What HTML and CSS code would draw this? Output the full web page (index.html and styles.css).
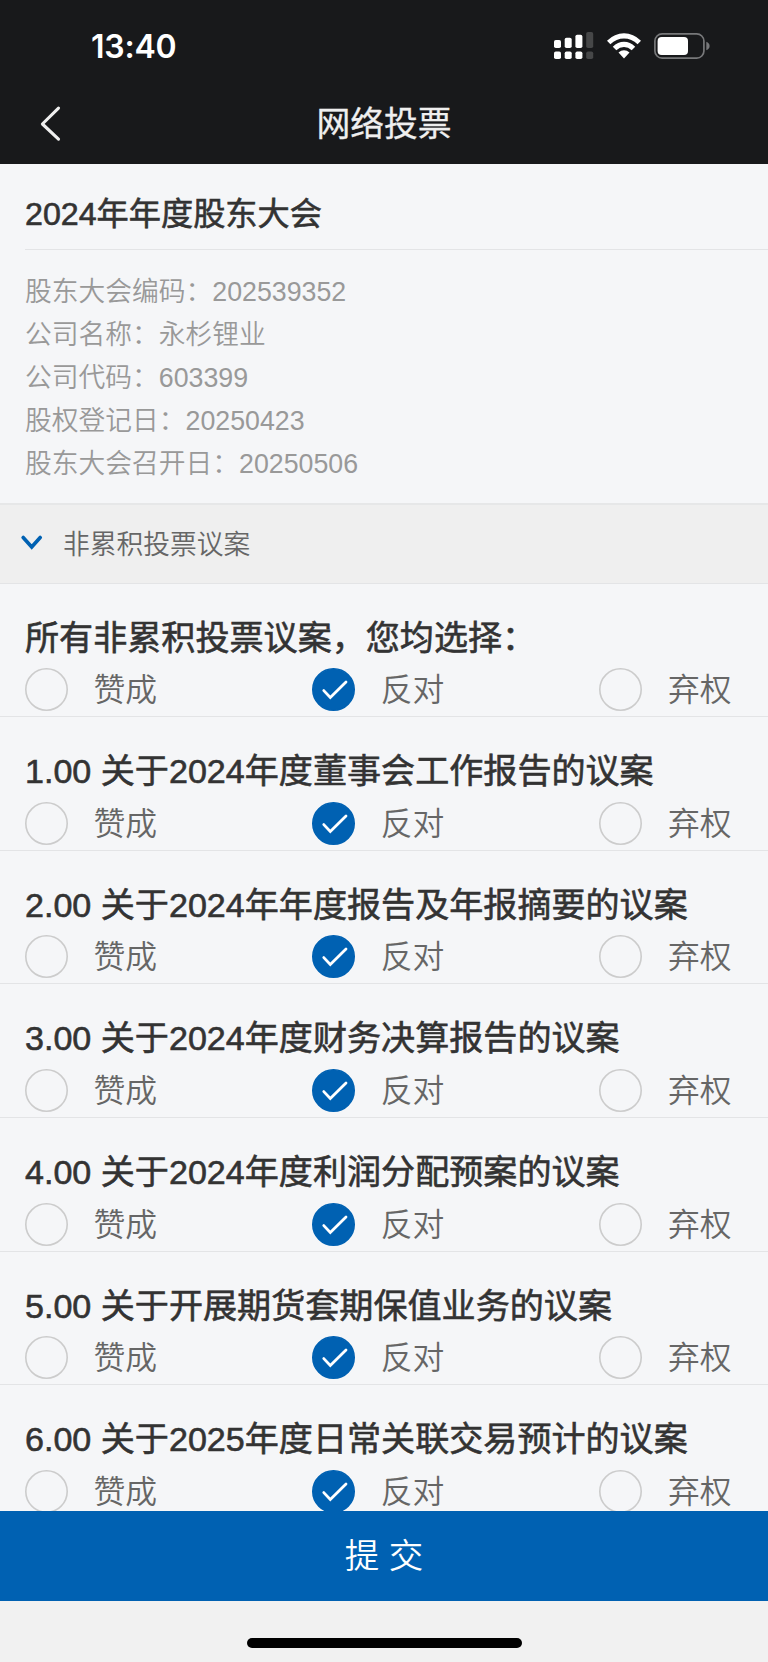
FILE: index.html
```
<!DOCTYPE html>
<html lang="zh-CN">
<head>
  <meta charset="UTF-8">
  <meta name="viewport" content="width=device-width, initial-scale=1.0">
  <title>网络投票</title>
  <link rel="stylesheet" href="styles.css">
</head>
<body>
  <div class="app">
    <header class="header">
      <div class="status-bar">
        <span class="time">13:40</span>
        <div class="status-icons">
          <svg class="signal" width="40" height="28" viewBox="0 0 40 28" fill="#fff">
            <rect x="0" y="8" width="7" height="8" rx="1.8"/>
            <rect x="10.7" y="5.8" width="7" height="10.2" rx="1.8"/>
            <rect x="21.4" y="2.8" width="7" height="13.2" rx="1.8"/>
            <rect x="32.2" y="0" width="7" height="16" rx="1.8" fill="#464748"/>
            <rect x="0" y="19.4" width="7" height="7.6" rx="1.8"/>
            <rect x="10.7" y="19.4" width="7" height="7.6" rx="1.8"/>
            <rect x="21.4" y="19.4" width="7" height="7.6" rx="1.8"/>
            <rect x="32.2" y="19.4" width="7" height="7.6" rx="1.8" fill="#464748"/>
          </svg>
          <svg class="wifi" width="34" height="26" viewBox="0 0 34 26" fill="#fff">
            <path d="M0 7.8Q7.5 0.3 17 .3T34 7.8L30.6 11.3Q24.7 5.6 17 5.6T3.4 11.3Z"/>
            <path d="M5.8 13.8Q10.8 8.8 17 8.8T28.2 13.8L24.7 17.3Q21.2 14 17 14T9.3 17.3Z"/>
            <path d="M11.5 19.5Q14 17.3 17 17.3T22.5 19.5L17 25.4Z"/>
          </svg>
          <svg class="battery" width="57" height="26" viewBox="0 0 57 26">
            <rect x=".9" y=".9" width="49" height="24.2" rx="7.2" fill="none" stroke="#77787a" stroke-width="1.7"/>
            <rect x="3.6" y="3.9" width="30.4" height="18.2" rx="4" fill="#fff"/>
            <path d="M52.3 8.8Q55.6 10 55.6 13T52.3 17.2Z" fill="#77787a"/>
          </svg>
        </div>
      </div>
      <div class="nav-bar">
        <a class="back" aria-label="返回">
          <svg width="22" height="36" viewBox="0 0 22 36">
            <path d="M18.5 2.2L2.4 18L18.5 33.2" fill="none" stroke="#efefef" stroke-width="3.1" stroke-linecap="round" stroke-linejoin="round"/>
          </svg>
        </a>
        <h1>网络投票</h1>
      </div>
    </header>

    <main class="content">
      <section class="meeting">
        <h2>2024年年度股东大会</h2>
        <ul class="details">
          <li>股东大会编码：202539352</li>
          <li>公司名称：永杉锂业</li>
          <li>公司代码：603399</li>
          <li>股权登记日：20250423</li>
          <li>股东大会召开日：20250506</li>
        </ul>
      </section>

      <div class="group-title">
        <svg width="22" height="16" viewBox="0 0 22 16">
          <path d="M2.2 2.5L10.7 12L19.2 2.5" fill="none" stroke="#0061b2" stroke-width="3.6" stroke-linecap="round"/>
        </svg>
        <span>非累积投票议案</span>
      </div>

      <div id="proposals"></div>
    </main>

    <footer class="footer">
      <button class="submit">提 交</button>
      <div class="home-area"><div class="home-bar"></div></div>
    </footer>
  </div>

  <script>
    const proposals = [
      "所有非累积投票议案，您均选择：",
      "1.00 关于2024年度董事会工作报告的议案",
      "2.00 关于2024年年度报告及年报摘要的议案",
      "3.00 关于2024年度财务决算报告的议案",
      "4.00 关于2024年度利润分配预案的议案",
      "5.00 关于开展期货套期保值业务的议案",
      "6.00 关于2025年度日常关联交易预计的议案"
    ];
    const options = ["赞成", "反对", "弃权"];

    // 默认全部选择「反对」
    const selected = 1;

    const radio = `<svg class="radio" viewBox="0 0 43 43">
      <circle cx="21.5" cy="21.5" r="20.7"/>
      <path d="M11.8 22.6L18.3 29.4L34 14"/>
    </svg>`;

    document.getElementById("proposals").innerHTML = proposals.map(title => `
      <section class="proposal">
        <h3>${title}</h3>
        <div class="options">
          ${options.map((name, i) => `<div class="option${i === selected ? " checked" : ""}">${radio}<span>${name}</span></div>`).join("")}
        </div>
      </section>`).join("");
  </script>
</body>
</html>
```
FILE: styles.css
```
* {
  box-sizing: border-box;
  margin: 0;
  padding: 0;
}

body {
  background: #f5f6f8;
  color: #333;
  font-family: "Liberation Sans", "Noto Sans CJK SC", sans-serif;
}

h1, h2, h3 {
  font-weight: normal;
  white-space: nowrap;
}

.app {
  display: flex;
  flex-direction: column;
  height: 1662px;
  overflow: hidden;
}

/* header */
.header {
  background: #18191b;
  color: #efefef;
  flex: none;
  height: 163.5px;
}

.status-bar {
  align-items: center;
  display: flex;
  height: 90px;
  justify-content: space-between;
  padding: 2px 57px 0 91px;
}

.time {
  color: #fff;
  font-family: Inter, sans-serif;
  font-size: 32px;
  font-weight: 600;
  letter-spacing: -.2px;
}

.status-icons {
  align-items: center;
  display: flex;
}

.wifi {
  margin-left: 13px;
}

.battery {
  margin-left: 13.5px;
}

.nav-bar {
  align-items: center;
  display: grid;
  grid-template-columns: 80px 1fr 80px;
  height: 67px;
}

.back {
  display: flex;
  padding-left: 40px;
}

h1 {
  font-size: 33.8px;
  line-height: 50px;
  text-align: center;
  -webkit-text-stroke: .3px;
}

/* meeting info */
.content {
  flex: 1;
  min-height: 0;
  overflow: hidden;
}

.meeting {
  height: 339.5px;
  padding-left: 25px;
}

h2 {
  border-bottom: 1.5px solid #e3e4e6;
  font-size: 32.2px;
  height: 86px;
  line-height: 101px;
  -webkit-text-stroke: .6px;
}

.details {
  color: #999;
  font-size: 26.75px;
  font-weight: 350;
  line-height: 43px;
  list-style: none;
  padding-top: 21px;
}

.group-title {
  align-items: center;
  background: #efefef;
  border-bottom: 1px solid #e3e4e6;
  border-top: 2px solid #e6e7e8;
  color: #666;
  display: flex;
  font-size: 26.75px;
  font-weight: 350;
  gap: 20px;
  height: 80.5px;
  padding: 0 0 2px 21px;
}

/* proposals */
.proposal {
  border-bottom: 1.5px solid #e3e4e6;
  height: 133.67px;
  padding: 28px 0 0 25px;
}

h3 {
  font-size: 34.1px;
  height: 56.5px;
  line-height: 53px;
  -webkit-text-stroke: .6px;
}

.options {
  display: grid;
  grid-template-columns: repeat(3, 287.2px);
}

.option {
  align-items: center;
  color: #666;
  display: flex;
  font-size: 31.8px;
  font-weight: 350;
  gap: 25.5px;
  height: 43px;
  line-height: 43px;
}

.option span {
  padding-top: 2px;
}

.radio {
  fill: none;
  flex: none;
  height: 43px;
  width: 43px;
}

.radio circle {
  stroke: #ccc;
  stroke-width: 1.6;
}

.radio path {
  stroke: none;
}

.checked circle {
  fill: #0061b2;
  stroke: #0061b2;
}

.checked path {
  stroke: #fff;
  stroke-linecap: round;
  stroke-width: 2.8;
}

/* footer */
.footer {
  background: #f1f1f1;
  flex: none;
  height: 151px;
}

.submit {
  background: #0061b2;
  border: none;
  color: #fff;
  display: block;
  font-family: inherit;
  font-size: 34.5px;
  font-weight: 350;
  height: 89.5px;
  line-height: 88px;
  width: 100%;
}

.home-area {
  display: flex;
  justify-content: center;
  padding-top: 37.5px;
}

.home-bar {
  background: #000;
  border-radius: 5px;
  height: 9.5px;
  width: 275px;
}
```
